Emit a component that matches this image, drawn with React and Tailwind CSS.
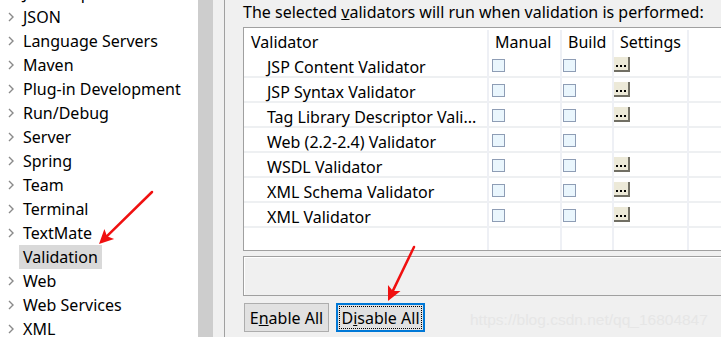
import React from "react";

const treeItems = [
  "JavaScript",
  "JSON",
  "Language Servers",
  "Maven",
  "Plug-in Development",
  "Run/Debug",
  "Server",
  "Spring",
  "Team",
  "Terminal",
  "TextMate",
  "Validation",
  "Web",
  "Web Services",
  "XML",
];

const validators = [
  { name: "JSP Content Validator", settings: true },
  { name: "JSP Syntax Validator", settings: true },
  { name: "Tag Library Descriptor Vali...", settings: true },
  { name: "Web (2.2-2.4) Validator", settings: false },
  { name: "WSDL Validator", settings: true },
  { name: "XML Schema Validator", settings: true },
  { name: "XML Validator", settings: true },
];

function Chevron() {
  return (
    <svg width="6" height="10" viewBox="0 0 6 10" className="shrink-0">
      <path d="M1 1 L5 5 L1 9" fill="none" stroke="#8a8a8a" strokeWidth="1.4" />
    </svg>
  );
}

function CheckBox() {
  return <div className="w-[13px] h-[13px] border border-[#8e9db5] bg-[#eaf6fd]" />;
}

function DotsButton() {
  return (
    <div className="w-[16px] h-[15px] bg-[#ece9d8] border-r-2 border-b-2 border-[#716f64] flex items-end justify-center pb-[3px] gap-[2px]">
      <span className="w-[2px] h-[2px] bg-black" />
      <span className="w-[2px] h-[2px] bg-black" />
      <span className="w-[2px] h-[2px] bg-black" />
    </div>
  );
}

function Arrow({ x1, y1, x2, y2 }) {
  const ang = Math.atan2(y2 - y1, x2 - x1);
  const len = 16;
  const spread = 0.45;
  const ax = x2 - len * Math.cos(ang - spread);
  const ay = y2 - len * Math.sin(ang - spread);
  const bx = x2 - len * Math.cos(ang + spread);
  const by = y2 - len * Math.sin(ang + spread);
  const mx = x2 - len * 0.7 * Math.cos(ang);
  const my = y2 - len * 0.7 * Math.sin(ang);
  return (
    <g>
      <line x1={x1} y1={y1} x2={mx} y2={my} stroke="#f01010" strokeWidth="2.5" strokeLinecap="round" />
      <path d={`M${x2} ${y2} L${ax} ${ay} L${mx} ${my} L${bx} ${by} Z`} fill="#f01010" />
    </g>
  );
}

export default function App() {
  return (
    <div
      className="relative w-[721px] h-[337px] overflow-hidden flex bg-[#f0f0f0] text-[16px] text-black"
      style={{ fontFamily: '"Noto Sans", "Open Sans", sans-serif' }}
    >
      {/* tree */}
      <div className="w-[198px] h-full bg-white overflow-hidden">
        <div className="mt-[-19px]">
          {treeItems.map((item) => (
            <div key={item} className="h-[24px] flex items-center">
              <div className="w-[19px] flex justify-end pr-[5px]">
                {item !== "Validation" && <Chevron />}
              </div>
              <span
                className={`px-[4px] h-[24px] leading-[24px] whitespace-nowrap ${
                  item === "Validation" ? "bg-[#d9d9d9]" : ""
                }`}
              >
                {item}
              </span>
            </div>
          ))}
        </div>
      </div>
      <div className="w-[15px] h-full bg-[#cdcdcd]" />
      <div className="w-[11px] h-full bg-[#f0f0f0]" />
      <div className="w-[1px] h-full bg-[#a0a0a0]" />

      {/* right panel */}
      <div className="flex-1 pl-[18px] flex flex-col">
        <div className="h-[27px] leading-[24px] whitespace-nowrap">
          The selected <span className="underline">v</span>alidators will run when validation is performed:
        </div>
        <div className="h-[224px] border border-[#a0a0a0] border-r-0 bg-white overflow-hidden">
          <div className="grid grid-cols-[245px_73px_52px_75px_1fr] h-[25px] leading-[25px] pt-[2px]">
            <div className="pl-[7px] border-r-2 border-[#eef0f5]">Validator</div>
            <div className="pl-[6px] border-r-2 border-[#eef0f5]">Manual</div>
            <div className="pl-[6px] border-r-2 border-[#eef0f5]">Build</div>
            <div className="pl-[6px] border-r-2 border-[#eef0f5]">Settings</div>
            <div />
          </div>
          {validators.map((v) => (
            <div
              key={v.name}
              className="grid grid-cols-[245px_73px_52px_75px_1fr] h-[25px] border-b-2 border-[#eef0f2]"
            >
              <div className="pl-[23px] pt-[2px] leading-[24px] whitespace-nowrap border-r-2 border-[#eef0f5]">
                {v.name}
              </div>
              <div className="pl-[3px] pt-[6px] border-r-2 border-[#eef0f5]">
                <CheckBox />
              </div>
              <div className="pl-[1px] pt-[6px] border-r-2 border-[#eef0f5]">
                <CheckBox />
              </div>
              <div className="pt-[4px] border-r-2 border-[#eef0f5]">{v.settings && <DotsButton />}</div>
              <div />
            </div>
          ))}
          <div className="grid grid-cols-[245px_73px_52px_75px_1fr] h-full">
            <div className="border-r-2 border-[#eef0f5]" />
            <div className="border-r-2 border-[#eef0f5]" />
            <div className="border-r-2 border-[#eef0f5]" />
            <div className="border-r-2 border-[#eef0f5]" />
            <div />
          </div>
        </div>
        <div className="mt-[5px] h-[40px] border border-[#a0a0a0] border-r-0 bg-[#f0f0f0] shadow-[inset_1px_1px_0_#ffffff]" />
        <div className="mt-[7px] flex gap-[7px] pl-[1px]">
          <button className="h-[29px] w-[85px] bg-[#e1e1e1] border border-[#adadad] leading-[26px]">
            E<span className="underline">n</span>able All
          </button>
          <button className="h-[29px] w-[89px] bg-[#e1e1e1] border-2 border-[#0078d7] p-[1px]">
            <div className="h-full w-full border border-dotted border-black leading-[22px]">
              D<span className="underline">i</span>sable All
            </div>
          </button>
        </div>
      </div>

      {/* watermark */}
      <div
        className="absolute left-[470px] top-[308px] text-[15.5px] text-[#e6e6e6] whitespace-nowrap"
        style={{ fontFamily: '"Liberation Sans", Arial, sans-serif' }}
      >
        https://blog.csdn.net/qq_16804847
      </div>

      {/* annotation arrows */}
      <svg className="absolute left-0 top-0 pointer-events-none" width="721" height="337">
        <Arrow x1={152} y1={192} x2={99} y2={244} />
        <Arrow x1={414} y1={247} x2={388} y2={301} />
      </svg>
    </div>
  );
}
